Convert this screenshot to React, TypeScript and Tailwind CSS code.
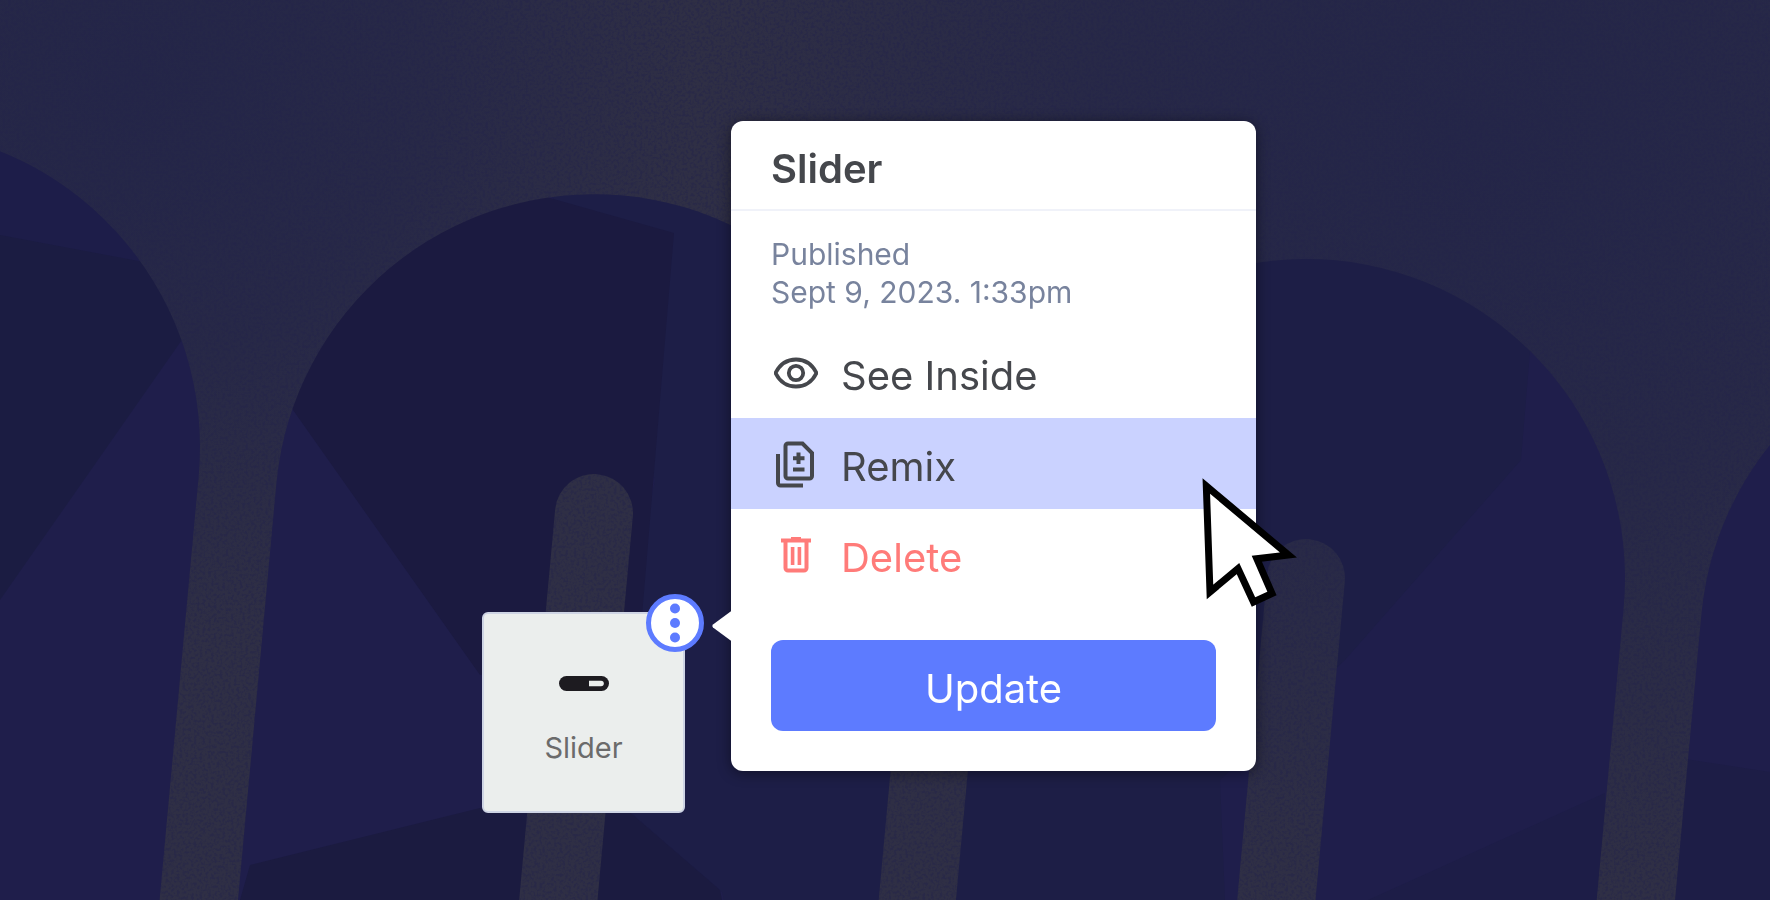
type Action = {
  label: string;
  icon: React.ReactNode;
  className?: string;
};

const LEG = 0.0922; // horizontal drift of an arch leg per pixel of height

// Arch centres: x, y of the round top
const arches = [
  { cx: -119, cy: 447 },
  { cx: 594, cy: 513 },
  { cx: 1306, cy: 578 },
  { cx: 2019, cy: 644 },
];

// Outline of a slanted leg shape with a round top, running off the bottom edge
const getLegPath = (cx: number, cy: number, r: number): string => {
  const bottom = 960;
  const angle = Math.atan(LEG);
  const dx = r * Math.cos(angle);
  const dy = r * Math.sin(angle);
  const leftX = cx - dx - (bottom - cy + dy) * LEG;
  const rightX = cx + dx - (bottom - cy - dy) * LEG;
  return `M${leftX} ${bottom}L${cx - dx} ${cy - dy}A${r} ${r} 0 0 1 ${cx + dx} ${cy + dy}L${rightX} ${bottom}Z`;
};

const Backdrop = () => (
  <svg
    className="absolute inset-0 size-full"
    viewBox="0 0 1770 900"
    preserveAspectRatio="xMidYMid slice"
    aria-hidden="true"
  >
    <defs>
      <radialGradient id="glowLeft" gradientUnits="userSpaceOnUse" cx="130" cy="80" r="560">
        <stop offset="0" stopColor="#242648" />
        <stop offset="0.5" stopColor="#242648" stopOpacity="0.7" />
        <stop offset="1" stopColor="#242648" stopOpacity="0" />
      </radialGradient>
      <radialGradient id="glowRight" gradientUnits="userSpaceOnUse" cx="1480" cy="130" r="760">
        <stop offset="0" stopColor="#242648" />
        <stop offset="0.5" stopColor="#242648" stopOpacity="0.7" />
        <stop offset="1" stopColor="#242648" stopOpacity="0" />
      </radialGradient>
      <filter id="grain" x="0" y="0" width="100%" height="100%" colorInterpolationFilters="sRGB">
        <feTurbulence type="fractalNoise" baseFrequency="0.35" numOctaves="2" seed="4" />
        <feColorMatrix values="0 0 0 0 0.14  0 0 0 0 0.14  0 0 0 0 0.29  4 0 0 0 -1.8" />
      </filter>
      <mask id="holes">
        <rect width="1770" height="900" fill="white" />
        {arches.map(({ cx, cy }) => (
          <path key={cx} d={getLegPath(cx, cy, 39)} fill="black" />
        ))}
      </mask>
      {arches.map(({ cx, cy }, i) => (
        <clipPath key={cx} id={`arch-${i}`}>
          <path d={getLegPath(cx, cy, 319)} />
        </clipPath>
      ))}
    </defs>

    <rect width="1770" height="900" fill="#2f2f45" />
    <rect width="1770" height="900" fill="url(#glowLeft)" />
    <rect width="1770" height="900" fill="url(#glowRight)" />
    <rect width="1770" height="900" filter="url(#grain)" opacity="0.5" />

    {/* Faceted arches */}
    <g mask="url(#holes)">
      <g clipPath="url(#arch-0)">
        <rect width="260" height="900" fill="#1f1e4b" />
        <path d="M0 100H200V314L0 600Z" fill="#1b1c42" />
        <path d="M0 100H200V273L133 260L0 235Z" fill="#1d1d49" />
      </g>
      <g clipPath="url(#arch-1)">
        <rect x="200" width="760" height="900" fill="#1f1e4b" />
        <path d="M550 190H960V900H724L722 892L625 808L600 760L655 480Z" fill="#1d1e47" />
        <path d="M270 374L293 410L480 675L640 640L674 233L550 198L520 180H270Z" fill="#1b1a40" />
        <path d="M240 900L250 865L480 808L625 808L720 890L722 900Z" fill="#1b1b40" />
      </g>
      <g clipPath="url(#arch-2)">
        <rect x="940" width="760" height="900" fill="#1f1e4b" />
        <path d="M940 240H1531V340L1521 460L1345 660L1220 780L1225 900H940Z" fill="#1d1e46" />
        <path d="M1368 900L1605 793V900Z" fill="#1d1d47" />
      </g>
      <g clipPath="url(#arch-3)">
        <rect x="1660" width="200" height="900" fill="#1f1e4b" />
        <path d="M1660 755L1770 772V900H1660Z" fill="#1d1d46" />
      </g>
    </g>
  </svg>
);

const EyeIcon = () => (
  <svg className="w-11 h-8" viewBox="0 0 44 32" fill="none" stroke="currentColor" strokeWidth="3.8">
    <path d="M1.500 16C6 7 13.500 2.500 22 2.500S38 7 42.500 16C38 25 30.500 29.500 22 29.500S6 25 1.500 16Z" strokeLinejoin="round" />
    <circle cx="22" cy="16" r="7.200" />
  </svg>
);

const RemixIcon = () => (
  <svg className="w-10 h-12" viewBox="1 0 40 48" fill="none" stroke="currentColor" strokeWidth="4">
    <path d="M13 3.500H27.500L37 13V36A2.500 2.500 0 0 1 34.500 38.500H13A2.500 2.500 0 0 1 10.500 36V6A2.500 2.500 0 0 1 13 3.500Z" />
    <path d="M3 14V43A2.500 2.500 0 0 0 5.500 45.500H28" />
    <path d="M23.500 12.500V24M18 18.300H29.500M18 29.500H29.500" />
  </svg>
);

const TrashIcon = () => (
  <svg className="w-8 h-9" viewBox="0 0 32 36" fill="none" stroke="currentColor" strokeWidth="4">
    <path d="M1 3.500H31" />
    <path d="M11 1.500H21" strokeWidth="3" />
    <path d="M5.500 4V31A2.500 2.500 0 0 0 8 33.500H24A2.500 2.500 0 0 0 26.500 31V4" />
    <path d="M12.600 10V28M19.400 10V28" strokeWidth="3.600" />
  </svg>
);

const SliderGlyph = () => (
  <svg className="w-[50px] h-[15px]" viewBox="0 0 50 15" aria-hidden="true">
    <rect width="50" height="15" rx="7.500" fill="#1d1b20" />
    <path d="M30 4.700H42A2.800 2.800 0 0 1 42 10.300H30Z" fill="#ebeeed" />
  </svg>
);

const Cursor = () => (
  <svg className="absolute left-[471px] top-[357px] w-24 h-[130px] pointer-events-none" viewBox="0 0 96 130" aria-hidden="true">
    <path
      d="M4.300 8L86.500 77L54.800 80.700L70 115.500L51.500 124L36 90.500L8 114Z"
      fill="white"
      stroke="black"
      strokeWidth="7"
      strokeMiterlimit="10"
    />
  </svg>
);

const actions: Action[] = [
  { label: "See Inside", icon: <EyeIcon /> },
  { label: "Remix", icon: <RemixIcon />, className: "bg-[#cad2ff]" },
  { label: "Delete", icon: <TrashIcon />, className: "text-[#ff7b79]" },
];

const ComponentTile = () => (
  <div className="relative mt-[491px] flex h-[201px] w-[203px] shrink-0 flex-col items-center rounded-md border-2 border-[#ced4e4] bg-[#ebeeed] pt-[62px]">
    <SliderGlyph />
    <div className="mt-9 text-[29px] leading-[42px] text-[#6b6b6b]">Slider</div>
    <button
      aria-label="More options"
      className="absolute -top-5 -right-[21px] flex size-[58px] items-center justify-center rounded-full border-[5px] border-[#5d7bff] bg-white"
    >
      <svg className="w-3 h-10 shrink-0" viewBox="0 0 12 40" fill="#5d7bff">
        <circle cx="6" cy="5.500" r="5" />
        <circle cx="6" cy="20" r="5" />
        <circle cx="6" cy="34.500" r="5" />
      </svg>
    </button>
  </div>
);

const OptionsMenu = () => (
  <div className="relative w-full max-w-[525px] rounded-xl bg-white pb-10 text-[#45474c] shadow-[0_2px_14px_rgba(0,0,0,0.45)]">
    <svg className="absolute -left-5 top-[488px] w-[21px] h-[34px]" viewBox="0 0 21 34" aria-hidden="true">
      <path d="M21 1.500L2 15.500Q0.500 17 2 18.500L21 32.500Z" fill="white" />
    </svg>

    <h2 className="border-b-2 border-[#f0f2f9] px-10 pt-5 pb-3 text-[40px] leading-[56px] font-semibold">Slider</h2>

    <p className="px-10 pt-6 text-[30px] leading-[38px] text-[#78839d]">
      Published
      <br />
      Sept 9, 2023. 1:33pm
    </p>

    <ul className="pt-4">
      {actions.map(({ label, icon, className }) => (
        <li key={label}>
          <button className={`flex h-[91px] w-full items-center px-10 text-left text-[40px] ${className ?? ""}`}>
            <span className="flex w-[50px] justify-center">{icon}</span>
            <span className="ml-5 pt-1.5">{label}</span>
          </button>
        </li>
      ))}
    </ul>

    <div className="px-10 pt-10">
      <button className="h-[91px] w-full rounded-xl bg-[#5d7bff] pt-1.5 text-[40px] text-white">Update</button>
    </div>

    <Cursor />
  </div>
);

const App = () => {
  return (
    <main className="relative min-h-screen overflow-hidden bg-[#2a2945] font-['Inter',sans-serif]">
      <Backdrop />
      <div className="relative flex items-start justify-center gap-[46px] pt-[121px] pr-8">
        <ComponentTile />
        <OptionsMenu />
      </div>
    </main>
  );
};

export default App;
